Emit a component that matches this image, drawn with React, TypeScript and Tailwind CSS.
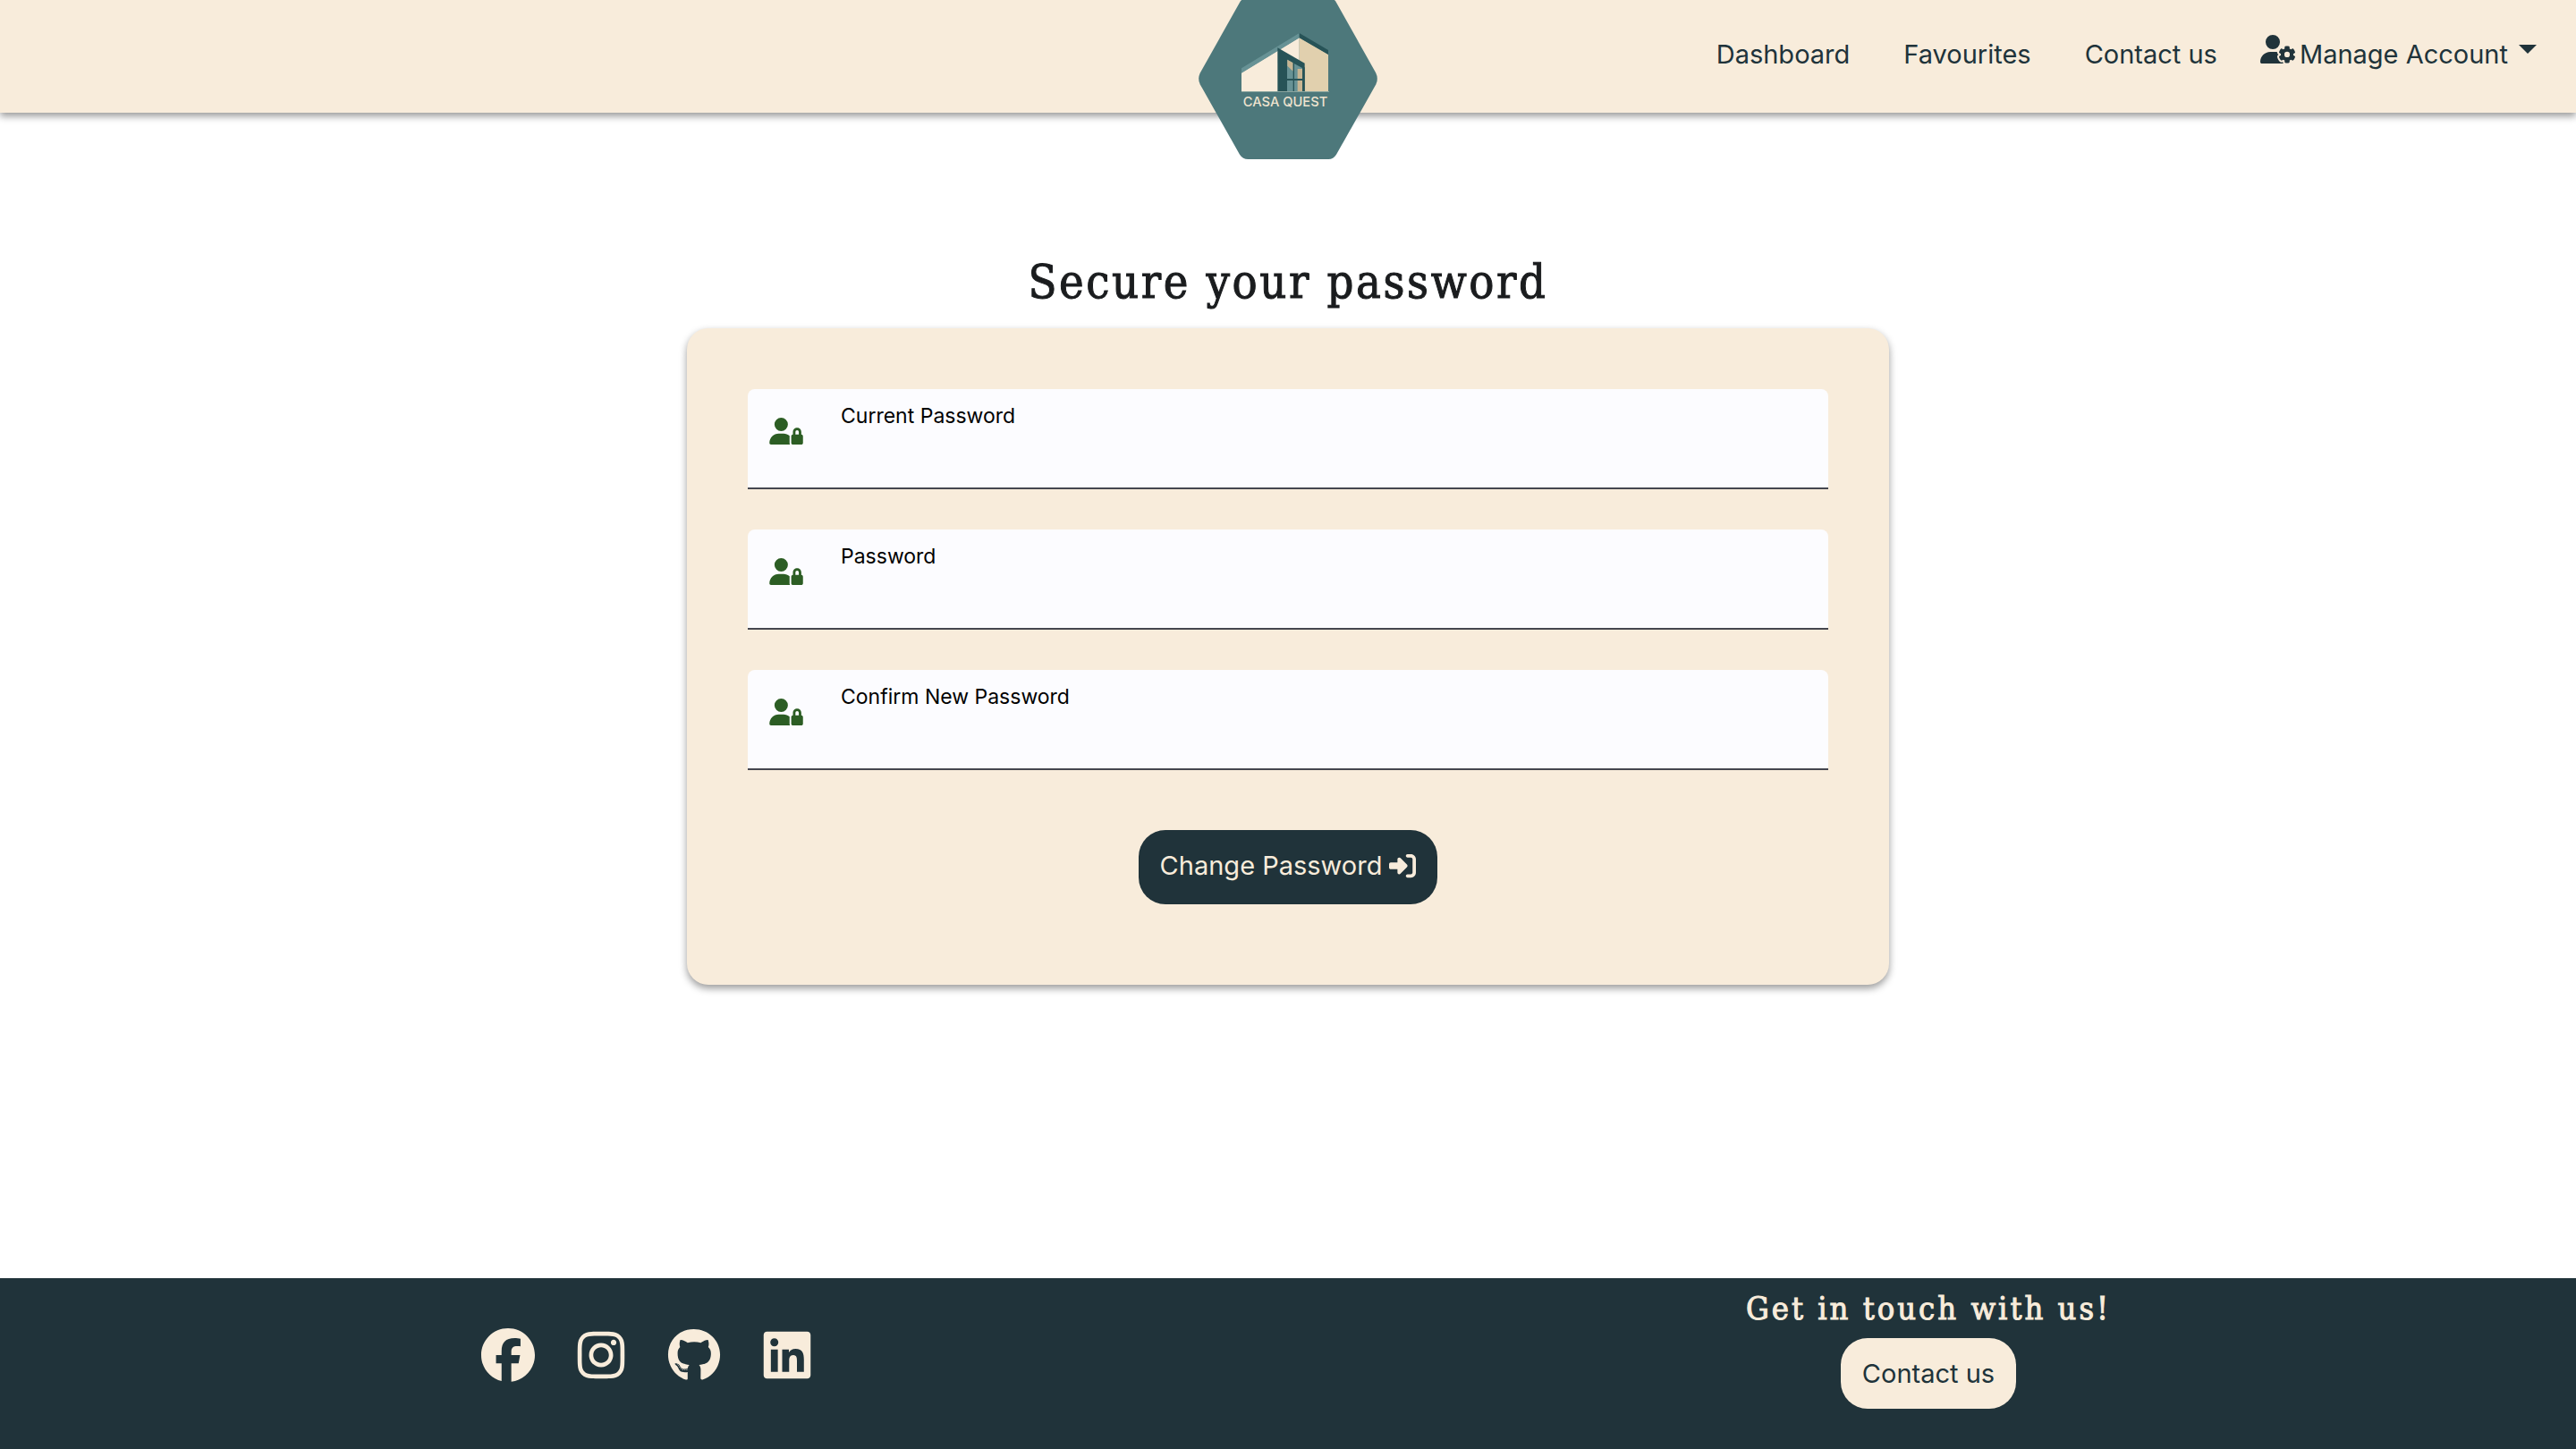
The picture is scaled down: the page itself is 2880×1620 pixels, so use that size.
import {
  FaFacebook,
  FaGithub,
  FaInstagram,
  FaLinkedin,
  FaRightToBracket,
  FaUserGear,
  FaUserLock,
} from "react-icons/fa6";

const navLinks = ["Dashboard", "Favourites", "Contact us"];

const fields = [
  { id: "current-password", label: "Current Password" },
  { id: "new-password", label: "Password" },
  { id: "confirm-password", label: "Confirm New Password" },
];

const socials = [
  { name: "Facebook", Icon: FaFacebook },
  { name: "Instagram", Icon: FaInstagram },
  { name: "GitHub", Icon: FaGithub },
  { name: "LinkedIn", Icon: FaLinkedin },
];

function Logo() {
  return (
    <svg viewBox="60 0 600 534" className="w-[200px]" role="img" aria-label="Casa Quest">
      <path
        d="M222 -8H500Q514 -6 522 8L655 245Q664 264 655 283L522 518Q512 534 496 534H226Q208 534 198 518L65 283Q56 264 65 245L198 8Q206 -6 222 -8Z"
        fill="#4d787b"
      />
      <path d="M204 244L398 126V308H204Z" fill="#f8ecdb" />
      <path d="M398 126L495 182V308H398Z" fill="#e1d0ae" />
      <path d="M204 229L398 111V127L204 245Z" fill="#679295" />
      <path d="M398 111L495 168V183L398 127Z" fill="#275357" />
      <path d="M325 160L416 212V308H325Z" fill="#275357" />
      <path d="M357 200L412 230V308H357Z" fill="#679295" />
      <path d="M358 200L377 211V239L358 221Z" fill="#c8b592" />
      <path d="M392 231H408V308H392Z" fill="#c8b592" />
      <path d="M377 210H381V308H377ZM357 264H412V270H357ZM408 226H416V308H408Z" fill="#275357" />
      <path d="M204 306H498V309H204Z" fill="#8aa59f" />
      <text
        x="351"
        y="356"
        textAnchor="middle"
        fontSize="44"
        fontWeight="500"
        className="font-['Inter',sans-serif]"
        fill="#eee3cf"
      >
        CASA QUEST
      </text>
    </svg>
  );
}

function Header() {
  return (
    <header className="relative flex h-[126px] justify-end bg-[#f8ecdb] pr-11 shadow-[0_4px_8px_rgba(0,0,0,0.4)]">
      <a href="#home" className="absolute top-0 left-1/2 -translate-x-1/2">
        <Logo />
      </a>
      <nav className="flex h-[122px] items-center gap-[60px] text-[29px] leading-10 text-[#20333a]">
        {navLinks.map((link) => (
          <a key={link} href="#nav">
            {link}
          </a>
        ))}
        <button type="button" className="-ml-3 flex items-center gap-1">
          <FaUserGear className="mb-3 h-8 w-10" />
          Manage Account
          <svg viewBox="0 0 20 10" className="mb-3 ml-2 w-5" aria-hidden="true">
            <path d="M0 0H20L10 10Z" fill="currentColor" />
          </svg>
        </button>
      </nav>
    </header>
  );
}

function PasswordField({ id, label }: { id: string; label: string }) {
  return (
    <div className="flex h-[112px] rounded-t-lg border-b-2 border-[#45464f] bg-[#fcfcff] pl-6">
      <FaUserLock className="mt-8 h-[30px] w-[38px] text-[#2c5d24]" />
      <div className="ml-[42px] flex grow flex-col pt-3">
        <label htmlFor={id} className="text-[23px] leading-9 text-black">
          {label}
        </label>
        <input id={id} type="password" className="w-full grow bg-transparent text-[29px] outline-none" />
      </div>
    </div>
  );
}

export default function App() {
  return (
    <div className="flex min-h-screen flex-col bg-white font-['Inter',sans-serif]">
      <Header />
      <main className="flex grow flex-col items-center pt-[153px]">
        <h1 className="text-[52px] leading-[72px] tracking-wider text-[#1a1c1e] [-webkit-text-stroke:1px] font-['DejaVu_Serif_Condensed','DejaVu_Serif',serif]">
          Secure your password
        </h1>
        <form className="mt-4 flex w-7/15 flex-col gap-[45px] rounded-3xl bg-[#f8ecdb] px-[68px] pt-[68px] pb-[90px] shadow-[0_4px_8px_rgba(0,0,0,0.4)]">
          {fields.map((field) => (
            <PasswordField key={field.id} {...field} />
          ))}
          <button
            type="button"
            className="mt-[22px] flex h-[83px] items-center gap-2 self-center rounded-[30px] bg-[#20333a] px-6 pb-1 text-[29px] text-[#f8ecdb]"
          >
            Change Password
            <FaRightToBracket className="size-[30px]" />
          </button>
        </form>
      </main>
      <footer className="grid h-[191px] grid-cols-2 bg-[#20333a] text-[#f8ecdb]">
        <div className="flex items-center justify-center gap-11 pb-5 pl-2">
          {socials.map(({ name, Icon }) => (
            <a key={name} href="#social" aria-label={name}>
              <Icon className="h-[60px] w-auto" />
            </a>
          ))}
        </div>
        <div className="flex flex-col items-center pt-3 pr-2">
          <h2 className="text-[36px] leading-11 tracking-[3px] [-webkit-text-stroke:1px] font-['DejaVu_Serif_Condensed','DejaVu_Serif',serif]">
            Get in touch with us!
          </h2>
          <a
            href="#contact"
            className="mt-[11px] flex h-[79px] items-center rounded-[30px] bg-[#f8ecdb] px-6 text-[29px] text-[#20333a]"
          >
            Contact us
          </a>
        </div>
      </footer>
    </div>
  );
}
